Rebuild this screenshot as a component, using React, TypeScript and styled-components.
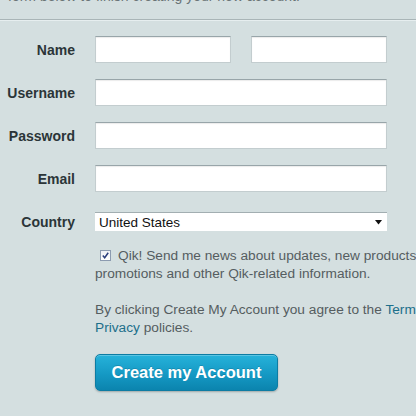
import React from "react";
import styled, { createGlobalStyle } from "styled-components";

const Global = createGlobalStyle`
  html, body { margin: 0; padding: 0; background: #d4dfe0; overflow: hidden; }
  body { font-family: "Liberation Sans", Arial, sans-serif; }
`;

const Page = styled.div`
  width: 416px;
  height: 416px;
  overflow: hidden;
  background: #d4dfe0;
`;

const Intro = styled.p`
  margin: -12px 0 0 8px;
  font-size: 14px;
  line-height: 16px;
  color: #6a7476;
  white-space: nowrap;
`;

const Divider = styled.hr`
  margin: 15px 0 0 0;
  border: 0;
  border-top: 1px solid #a9b5b7;
  border-bottom: 1px solid #e6eeef;
  height: 0;
`;

const Form = styled.form`
  display: grid;
  grid-template-columns: 75px 320px;
  column-gap: 20px;
  row-gap: 16px;
  padding-top: 15px;
  width: 600px;
`;

const Label = styled.label`
  justify-self: end;
  align-self: center;
  font-weight: bold;
  font-size: 14px;
  color: #2b3538;
  white-space: nowrap;
`;

const Pair = styled.div`
  display: flex;
  gap: 20px;
`;

const Input = styled.input<{ $w?: number }>`
  box-sizing: border-box;
  width: ${(p) => (p.$w ? `${p.$w}px` : "292px")};
  height: 27px;
  margin: 0;
  background: #ffffff;
  border: 1px solid #c3cdcf;
  border-top-color: #98a5a9;
  box-shadow: inset 0 1px 1px rgba(0, 0, 0, 0.08);
  font-family: inherit;
  font-size: 14px;
  padding: 0 6px;
  outline: none;
`;

const SelectWrap = styled.div`
  position: relative;
  width: 292px;
  height: 27px;
  display: flex;
  align-items: center;
`;

const Select = styled.select`
  box-sizing: border-box;
  width: 292px;
  height: 19px;
  margin: 0;
  appearance: none;
  -webkit-appearance: none;
  background: #ffffff;
  border: 0;
  border-top: 1px solid #a2aeb1;
  border-radius: 0;
  font-family: "Liberation Sans", Arial, sans-serif;
  font-size: 13.5px;
  color: #111;
  padding: 0 0 0 4px;
  outline: none;
`;

const Arrow = styled.svg`
  position: absolute;
  right: 4px;
  top: 12px;
  pointer-events: none;
`;

const Wide = styled.div`
  grid-column: 2;
  font-size: 13.7px;
  line-height: 18px;
  color: #555d60;
  white-space: nowrap;
`;

const Opt = styled(Wide)`
  margin-top: -4px;
`;

const Terms = styled(Wide)`
  margin-top: 2px;
`;

const Check = styled.span`
  display: inline-block;
  box-sizing: border-box;
  width: 11px;
  height: 11px;
  border: 1px solid #8c9bb0;
  background: linear-gradient(#eef0f6, #ffffff);
  margin: 0 7px 0 5px;
  vertical-align: -1px;
  position: relative;
`;

const Link = styled.a`
  color: #1c6f8b;
  text-decoration: none;
`;

const Button = styled.button`
  grid-column: 2;
  justify-self: start;
  margin-top: 1px;
  width: 183px;
  height: 37px;
  border-radius: 5px;
  border: 1px solid #0d7ca3;
  background: linear-gradient(#26b2da, #1599c4 55%, #0b84ae);
  box-shadow: 0 1px 2px rgba(0, 0, 0, 0.25), inset 0 1px 0 rgba(255, 255, 255, 0.25);
  color: #fff;
  font-family: "Liberation Sans", Arial, sans-serif;
  font-weight: bold;
  font-size: 16.5px;
  padding: 0;
  text-shadow: 0 -1px 0 rgba(0, 0, 0, 0.15);
  cursor: pointer;
`;

export default function App() {
  return (
    <Page>
      <Global />
      <Intro>form below to finish creating your new account.</Intro>
      <Divider />
      <Form onSubmit={(e) => e.preventDefault()}>
        <Label>Name</Label>
        <Pair>
          <Input $w={136} />
          <Input $w={136} />
        </Pair>
        <Label>Username</Label>
        <Input />
        <Label>Password</Label>
        <Input type="password" />
        <Label>Email</Label>
        <Input />
        <Label>Country</Label>
        <SelectWrap>
          <Select defaultValue="us">
            <option value="us">United States</option>
          </Select>
          <Arrow width="8" height="5" viewBox="0 0 8 5">
            <path d="M0 0 H7 L3.5 4.5 Z" fill="#111" />
          </Arrow>
        </SelectWrap>
        <Opt>
          <Check>
            <svg width="9" height="9" viewBox="0 0 9 9" style={{ position: "absolute", left: 0, top: 0 }}>
              <path d="M1.8 4.5 L3.7 6.8 L7.2 1.8" stroke="#2a3d7c" strokeWidth="1.5" fill="none" />
            </svg>
          </Check>
          Qik! Send me news about updates, new products,
          <br />
          promotions and other Qik-related information.
        </Opt>
        <Terms>
          By clicking Create My Account you agree to the <Link href="#">Terms</Link> and
          <br />
          <Link href="#">Privacy</Link> policies.
        </Terms>
        <Button type="submit">Create my Account</Button>
      </Form>
    </Page>
  );
}
